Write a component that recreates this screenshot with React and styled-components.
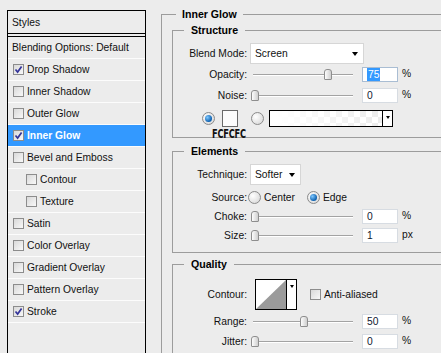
import React from 'react';
import styled, { createGlobalStyle } from 'styled-components';

const GlobalStyle = createGlobalStyle`
  html, body {
    margin: 0;
    padding: 0;
    background: #ececec;
    overflow: hidden;
  }
  body {
    font-family: "Liberation Sans", Arial, sans-serif;
    font-size: 10.3px;
    color: #111;
  }
`;

const Page = styled.div`
  display: flex;
  align-items: flex-start;
  width: 441px;
  height: 353px;
  overflow: hidden;
  background: #ececec;
`;

/* ---------- left: styles list ---------- */

const StylesPanel = styled.div`
  flex: none;
  box-sizing: border-box;
  width: 139px;
  height: 360px;
  margin: 10px 0 0 7px;
  border: 1px solid #000;
  background: #ececec;
`;

const PanelHeader = styled.div`
  height: 22px;
  display: flex;
  align-items: center;
  padding-left: 4px;
  border-bottom: 4px double #000;
`;

const ListRow = styled.div`
  height: 21px;
  display: flex;
  align-items: center;
  gap: 3px;
  padding-left: ${p => p.$pad}px;
  border-bottom: 1px solid #fcfcfc;
  background: ${p => (p.$active ? '#3399ff' : 'transparent')};
  color: ${p => (p.$active ? '#fff' : '#111')};
  font-weight: ${p => (p.$active ? 'bold' : 'normal')};
`;

const Box = styled.span`
  flex: none;
  box-sizing: border-box;
  width: 11px;
  height: 11px;
  border: 1px solid #8c8c8c;
  background: linear-gradient(135deg, #d9d9d9, #f8f8f8);
  display: flex;
  align-items: center;
  justify-content: center;
`;

const Check = ({ on }) => (
  <Box>
    {on && (
      <svg width="9" height="9" viewBox="0 0 9 9">
        <path d="M1.5 4.5 L3.6 7 L7.6 1.5" fill="none" stroke="#34349a" strokeWidth="1.7" />
      </svg>
    )}
  </Box>
);

const effects = [
  { name: 'Drop Shadow', on: true },
  { name: 'Inner Shadow' },
  { name: 'Outer Glow' },
  { name: 'Inner Glow', on: true, active: true },
  { name: 'Bevel and Emboss' },
  { name: 'Contour', sub: true },
  { name: 'Texture', sub: true },
  { name: 'Satin' },
  { name: 'Color Overlay' },
  { name: 'Gradient Overlay' },
  { name: 'Pattern Overlay' },
  { name: 'Stroke', on: true },
];

/* ---------- right: settings ---------- */

const Settings = styled.div`
  flex: none;
  width: 300px;
  margin: 8px 0 0 15px;
`;

const Group = styled.fieldset`
  margin: ${p => p.$mt || 0}px 0 0 0;
  padding: ${p => p.$pad};
  border: 1px solid #9c9c9c;
  min-width: 0;
  min-height: ${p => p.$minH || 0}px;
`;

const Legend = styled.legend`
  margin-left: ${p => p.$offset}px;
  padding: 0 ${p => p.$space}px;
  font-weight: bold;
  font-size: 10.6px;
  line-height: 13px;
  color: #000;
`;

const Row = styled.div`
  display: flex;
  align-items: center;
  height: ${p => p.$h}px;
  margin-top: ${p => p.$mt}px;
  padding-left: ${p => p.$indent || 0}px;
`;

const Label = styled.span`
  flex: none;
  width: 74px;
  margin-right: ${p => p.$gap ?? 3}px;
  text-align: right;
`;

const Select = styled.div`
  box-sizing: border-box;
  width: ${p => p.$w}px;
  height: 21px;
  display: flex;
  align-items: center;
  justify-content: space-between;
  padding: 0 5px 0 4px;
  background: #fff;
  border: 1px solid #d6d6d6;
`;

const Arrow = styled.span`
  width: 0;
  height: 0;
  border-left: 3.5px solid transparent;
  border-right: 3.5px solid transparent;
  border-top: 4px solid #000;
`;

const Track = styled.div`
  position: relative;
  flex: none;
  width: 106px;
  height: 15px;
  &::before {
    content: '';
    position: absolute;
    left: 3px;
    right: 3px;
    top: 7px;
    height: 1px;
    background: #a3a3a3;
    border-bottom: 1px solid #fff;
  }
`;

const Thumb = styled.span`
  position: absolute;
  top: 2px;
  box-sizing: border-box;
  width: 8px;
  height: 11px;
  border: 1px solid #8e8e8e;
  border-radius: 3px 3px 1px 1px;
  background: linear-gradient(90deg, #fdfdfd, #cfcfcf);
`;

const Slider = ({ value }) => (
  <Track>
    <Thumb style={{ left: 1 + value * 0.97 }} />
  </Track>
);

const Value = styled.div`
  flex: none;
  box-sizing: border-box;
  width: 36px;
  height: 15px;
  margin-left: 6px;
  padding-left: 4px;
  display: flex;
  align-items: center;
  background: #fff;
  border: 1px solid ${p => (p.$focus ? '#a9bdd3' : '#d7dce2')};
  color: #101830;
`;

const Selected = styled.span`
  background: #3399ff;
  color: #fff;
  padding: 1px 1px;
`;

const Unit = styled.span`
  margin-left: 4px;
  margin-top: -3px;
`;

const Radio = styled.span`
  flex: none;
  box-sizing: border-box;
  width: 13px;
  height: 13px;
  border-radius: 50%;
  border: 1px solid #8a8a8a;
  background: radial-gradient(circle at 35% 35%, #ffffff, #d2d2d2);
  display: flex;
  align-items: center;
  justify-content: center;
  margin-left: ${p => p.$ml || 0}px;
  &::after {
    content: '';
    display: ${p => (p.$on ? 'block' : 'none')};
    width: 7px;
    height: 7px;
    border-radius: 50%;
    background: radial-gradient(circle at 35% 35%, #7fc8ff, #0b5fae 70%);
  }
`;

const RadioText = styled.span`
  margin-left: 3px;
`;

const SwatchWrap = styled.div`
  position: relative;
  margin-left: 7px;
`;

const Swatch = styled.div`
  box-sizing: border-box;
  width: 16px;
  height: 17px;
  border: 1px solid #6a6a6a;
  background: #fcfcfc;
`;

const Caption = styled.span`
  position: absolute;
  top: 18px;
  left: -10px;
  font-family: "DejaVu Sans", sans-serif;
  font-weight: bold;
  font-size: 12.5px;
  line-height: 12px;
  letter-spacing: -0.3px;
  color: #111;
  transform: scaleX(0.66);
  transform-origin: left top;
  white-space: nowrap;
`;

const GradientPick = styled.div`
  box-sizing: border-box;
  width: 124px;
  height: 17px;
  margin-left: 5px;
  display: flex;
  border: 1px solid #000;
`;

const GradientFill = styled.div`
  flex: 1;
  background:
    linear-gradient(to right, #fff 5%, rgba(255, 255, 255, 0.3) 100%),
    repeating-conic-gradient(#e4e4e4 0 25%, #ffffff 0 50%) 0 0 / 12px 12px;
`;

const PickButton = styled.div`
  flex: none;
  width: 10px;
  border-left: 1px solid #000;
  background: #fff;
  display: flex;
  justify-content: center;
  padding-top: 5px;
  box-sizing: border-box;
`;

const SmallArrow = styled.span`
  width: 0;
  height: 0;
  border-left: 2.5px solid transparent;
  border-right: 2.5px solid transparent;
  border-top: 3px solid #000;
`;

const ContourPick = styled.div`
  box-sizing: border-box;
  width: 42px;
  height: 31px;
  margin-left: 4px;
  display: flex;
  border: 1px solid #000;
  background: #fff;
`;

const CheckLabel = styled.label`
  display: flex;
  align-items: center;
  gap: 3px;
  margin-left: 13px;
`;

function App() {
  return (
    <Page>
      <GlobalStyle />
      <StylesPanel>
        <PanelHeader>Styles</PanelHeader>
        <ListRow $pad={4}>Blending Options: Default</ListRow>
        {effects.map(e => (
          <ListRow key={e.name} $pad={e.sub ? 18 : 5} $active={e.active}>
            <Check on={e.on} />
            {e.name}
          </ListRow>
        ))}
      </StylesPanel>

      <Settings>
        <Group $pad="3px 0 0 10px" $minH={380}>
          <Legend $offset={4} $space={6}>Inner Glow</Legend>

          <Group $pad="0 0 10px 0">
            <Legend $offset={11} $space={7}>Structure</Legend>
            <Row $h={21} $mt={6}>
              <Label>Blend Mode:</Label>
              <Select $w={114}>
                Screen
                <Arrow />
              </Select>
            </Row>
            <Row $h={15} $mt={3}>
              <Label>Opacity:</Label>
              <Slider value={75} />
              <Value $focus>
                <Selected>75</Selected>
              </Value>
              <Unit>%</Unit>
            </Row>
            <Row $h={15} $mt={6}>
              <Label>Noise:</Label>
              <Slider value={0} />
              <Value>0</Value>
              <Unit>%</Unit>
            </Row>
            <Row $h={17} $mt={7} $indent={29}>
              <Radio $on />
              <SwatchWrap>
                <Swatch />
                <Caption>FCFCFC</Caption>
              </SwatchWrap>
              <Radio $ml={13} />
              <GradientPick>
                <GradientFill />
                <PickButton>
                  <SmallArrow />
                </PickButton>
              </GradientPick>
            </Row>
          </Group>

          <Group $mt={7} $pad="0 0 9px 0">
            <Legend $offset={11} $space={7}>Elements</Legend>
            <Row $h={21} $mt={6}>
              <Label>Technique:</Label>
              <Select $w={51}>
                Softer
                <Arrow />
              </Select>
            </Row>
            <Row $h={13} $mt={6}>
              <Label $gap={1}>Source:</Label>
              <Radio />
              <RadioText>Center</RadioText>
              <Radio $ml={12} $on />
              <RadioText>Edge</RadioText>
            </Row>
            <Row $h={15} $mt={5}>
              <Label>Choke:</Label>
              <Slider value={0} />
              <Value>0</Value>
              <Unit>%</Unit>
            </Row>
            <Row $h={15} $mt={4}>
              <Label>Size:</Label>
              <Slider value={0} />
              <Value>1</Value>
              <Unit>px</Unit>
            </Row>
          </Group>

          <Group $mt={5} $pad="0 0 20px 0">
            <Legend $offset={11} $space={7}>Quality</Legend>
            <Row $h={31} $mt={8}>
              <Label $gap={4}>Contour:</Label>
              <ContourPick>
                <svg width="30" height="29" viewBox="0 0 30 29">
                  <polygon points="0,29 30,0 30,29" fill="#9b9b9b" />
                </svg>
                <PickButton>
                  <SmallArrow />
                </PickButton>
              </ContourPick>
              <CheckLabel>
                <Check />
                Anti-aliased
              </CheckLabel>
            </Row>
            <Row $h={15} $mt={4}>
              <Label>Range:</Label>
              <Slider value={50} />
              <Value>50</Value>
              <Unit>%</Unit>
            </Row>
            <Row $h={15} $mt={5}>
              <Label>Jitter:</Label>
              <Slider value={0} />
              <Value>0</Value>
              <Unit>%</Unit>
            </Row>
          </Group>
        </Group>
      </Settings>
    </Page>
  );
}

export default App;
